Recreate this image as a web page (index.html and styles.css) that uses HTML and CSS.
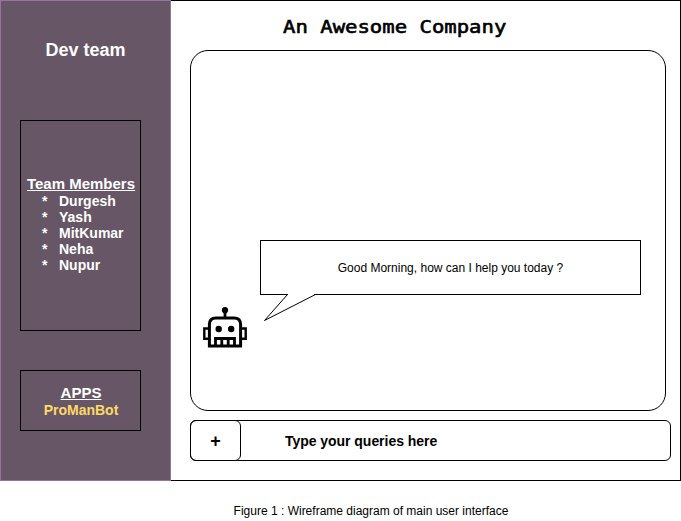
FILE: index.html
```html
<!DOCTYPE html>
<html lang="en">
<head>
<meta charset="utf-8">
<title>An Awesome Company</title>
<link rel="stylesheet" href="styles.css">
</head>
<body>
<div class="window">
  <aside class="sidebar">
    <h2 class="team-name">Dev team</h2>
    <section class="members">
      <h3 class="heading">Team Members</h3>
      <ul class="member-list">
        <li>Durgesh</li>
        <li>Yash</li>
        <li>MitKumar</li>
        <li>Neha</li>
        <li>Nupur</li>
      </ul>
    </section>
    <section class="apps">
      <h3 class="heading">APPS</h3>
      <div class="app">ProManBot</div>
    </section>
  </aside>
  <main class="main">
    <h1 class="title"><span>An Awesome Company</span></h1>
    <div class="chat">
      <svg class="robot" width="44" height="42" viewBox="0 0 44 42">
        <circle cx="22" cy="3.2" r="3.1"/>
        <path d="M22 4v7" fill="none" stroke="#000" stroke-width="2.8"/>
        <path d="M6.4 39.1V17.5Q6.4 10.9 13 10.9H31Q37.6 10.9 37.6 17.5V39.1Z" fill="none" stroke="#000" stroke-width="3"/>
        <path d="M6 21.5H1.3V31.8H6M38 21.5H42.7V31.8H38" fill="none" stroke="#000" stroke-width="2.4"/>
        <circle cx="15.7" cy="22" r="3.2"/>
        <circle cx="28.2" cy="22" r="3.2"/>
        <path d="M12.5 39V31.5H31.5V39M18.8 31V39M25.2 31V39" fill="none" stroke="#000" stroke-width="2.8"/>
      </svg>
      <div class="bubble">Good Morning, how can I help you today ?
        <svg class="tail" width="56" height="28" viewBox="0 0 56 28">
          <path d="M28 0H54V1H28Z" fill="#fff"/>
          <path d="M27.5 .5L4.5 26.5L55.5 .5" fill="none" stroke="#000"/>
        </svg>
      </div>
    </div>
    <div class="composer">
      <div class="add">+</div>
      <div class="prompt">Type your queries here</div>
    </div>
  </main>
</div>
<p class="caption">Figure 1 : Wireframe diagram of main user interface</p>
</body>
</html>
```
FILE: styles.css
```css
* { box-sizing: border-box; }
body {
  margin: 0;
  background: #fff;
  color: #000;
  font-family: "Liberation Sans", Arial, sans-serif;
}
h1, h2, h3, p, ul { margin: 0; padding: 0; }
.window { display: flex; width: 681px; height: 481px; }
.sidebar {
  width: 171px;
  padding: 0 19px;
  border: 1px solid #9673a6;
  background: #665666;
  color: #fff;
  font-weight: bold;
}
.team-name { height: 119px; padding-top: 38px; font-size: 18px; line-height: 22px; text-align: center; }
.members, .apps {
  display: flex;
  flex-direction: column;
  width: 121px;
  border: 1px solid #000;
}
.members { height: 211px; padding-top: 54px; }
.heading { padding-left: 1px; font-size: 15px; line-height: 18px; text-align: center; text-decoration: underline; white-space: nowrap; }
.member-list { list-style: none; font-size: 14px; line-height: 16px; }
.member-list li { display: flex; padding-left: 21px; }
.member-list li::before { content: "*"; width: 17px; }
.apps { height: 61px; margin-top: 39px; padding-top: 13px; }
.app { padding-left: 1px; color: #ffd966; font-size: 14px; line-height: 16px; text-align: center; }
.main {
  flex: 1;
  padding-left: 19px;
  border: 1px solid #000;
  border-left: 0;
}
.title {
  height: 49px;
  padding: 14px 0 0 93px;
  font: 18px/24px "DejaVu Sans Mono", monospace;
  -webkit-text-stroke: .6px #000;
  white-space: nowrap;
}
.title span { display: inline-block; transform: scaleX(1.145); transform-origin: left; }
.chat {
  display: flex;
  width: 476px;
  height: 361px;
  padding: 189px 0 0 12px;
  border: 1px solid #000;
  border-radius: 18px;
}
.robot { margin-top: 66.5px; }
.bubble {
  position: relative;
  width: 381px;
  height: 55px;
  margin-left: 13px;
  border: 1px solid #000;
  font-size: 12px;
  line-height: 54px;
  text-align: center;
}
.tail { position: absolute; left: -1px; top: 53px; overflow: visible; }
.composer {
  display: flex;
  width: 481px;
  height: 41px;
  margin-top: 9px;
  border: 1px solid #000;
  border-radius: 6px;
  font-weight: bold;
  line-height: 41px;
}
.add {
  width: 51px;
  height: 41px;
  margin: -1px 0 0 -1px;
  border: 1px solid #000;
  border-radius: 6px;
  font-size: 18px;
  text-align: center;
}
.prompt { margin-left: 44px; font-size: 14px; letter-spacing: -.04px; }
.caption { margin: 22px 0 0 61px; font-size: 12px; line-height: 16px; text-align: center; }
```
